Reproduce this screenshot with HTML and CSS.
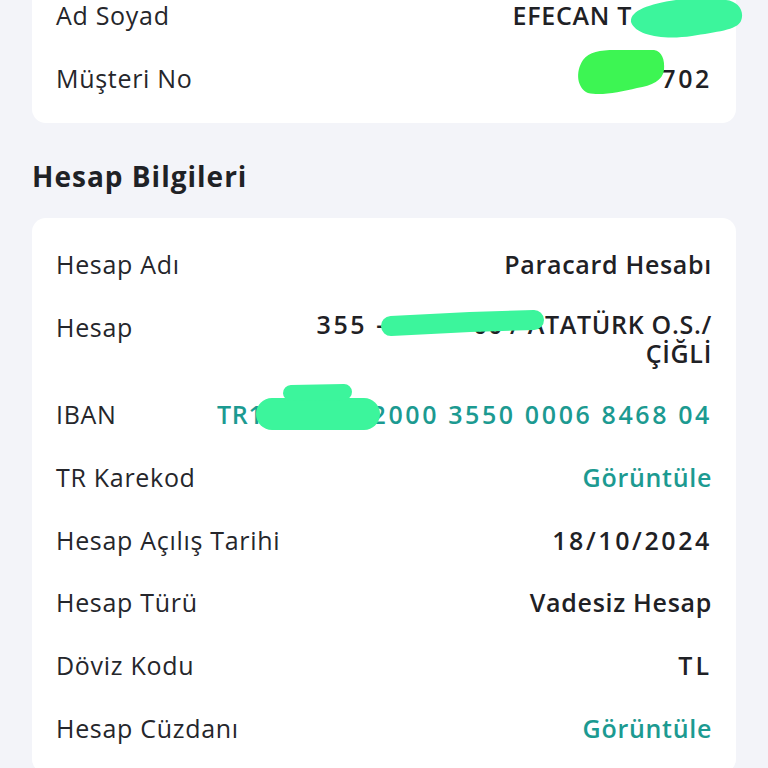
FILE: index.html
```html
<!DOCTYPE html>
<html lang="tr">
<head>
<meta charset="utf-8">
<title>Hesap Bilgileri</title>
<link rel="stylesheet" href="styles.css">
</head>
<body>
<main class="page">
  <section class="card card-top">
    <div class="row">
      <span class="label">Ad Soyad</span>
      <span class="value">EFECAN T<span class="mask mask-name">•••••</span></span>
    </div>
    <div class="row">
      <span class="label">Müşteri No</span>
      <span class="value num"><span class="mask mask-customer">••••</span>702</span>
    </div>
  </section>

  <h2 class="section-title">Hesap Bilgileri</h2>

  <section class="card card-main">
    <div class="row">
      <span class="label">Hesap Adı</span>
      <span class="value">Paracard Hesabı</span>
    </div>
    <div class="row">
      <span class="label">Hesap</span>
      <span class="value value-multi">
        <span class="line"><span class="num">355 -</span><span class="mask mask-branch">•••••</span>00 / ATATÜRK O.S./</span>
        <span class="line">ÇİĞLİ</span>
      </span>
    </div>
    <div class="row">
      <span class="label">IBAN</span>
      <span class="value link">TR1<span class="mask mask-iban">•••••••</span><span class="num">2000 3550 0006 8468 04</span></span>
    </div>
    <div class="row">
      <span class="label">TR Karekod</span>
      <span class="value link">Görüntüle</span>
    </div>
    <div class="row">
      <span class="label">Hesap Açılış Tarihi</span>
      <span class="value num">18/10/2024</span>
    </div>
    <div class="row">
      <span class="label">Hesap Türü</span>
      <span class="value">Vadesiz Hesap</span>
    </div>
    <div class="row">
      <span class="label">Döviz Kodu</span>
      <span class="value wide">TL</span>
    </div>
    <div class="row">
      <span class="label">Hesap Cüzdanı</span>
      <span class="value link">Görüntüle</span>
    </div>
  </section>
</main>

<svg class="redactions" width="768" height="768" viewBox="0 0 768 768" aria-hidden="true">
  <path class="mint-fill" d="M631 22 C630 11 648 4 676 0 L726 0 C738 1 745 11 741 21 C737 30 716 32 692 36 C664 40 636 36 631 22 Z"/>
  <path class="lime-fill" d="M583 60 C589 52 600 50 615 50 L654 50 C662 51 665 60 664 70 C663 80 652 86 637 88 C620 92 601 96 588 93 C577 88 575 72 583 60 Z"/>
  <g class="mint" stroke-linecap="round" stroke-linejoin="round">
    <path d="M391 326 L470 322 L534 320" stroke-width="20"/>
    <path d="M272 414 L364 414" stroke-width="32"/>
    <path d="M291 393 L344 392" stroke-width="16"/>
  </g>
</svg>
</body>
</html>
```

FILE: styles.css
```css
html, body {
  margin: 0;
  padding: 0;
}

body {
  background: #f3f4f9;
  font-family: "Open Sans", "Noto Sans", sans-serif;
  color: #222428;
  width: 768px;
  overflow: hidden;
}

.page {
  margin-top: -30.7px;
  padding: 0 32px;
}

.card {
  background: #ffffff;
  border-radius: 14px;
  padding: 31px 24px 30px;
  display: flex;
  flex-direction: column;
  gap: 32.9px;
}

.row {
  display: flex;
  justify-content: space-between;
  align-items: flex-start;
  gap: 16px;
  font-size: 25px;
  line-height: 30px;
  letter-spacing: 0.7px;
}

.label {
  font-weight: 400;
  white-space: nowrap;
  color: #25262b;
}

.value {
  font-weight: 600;
  text-align: right;
  white-space: nowrap;
  color: #1f2125;
}

.value-multi {
  display: flex;
  flex-direction: column;
  align-items: flex-end;
  line-height: 29px;
  margin: -2px 0 -2px;
}

.line {
  display: block;
}

.num {
  letter-spacing: 2.6px;
}

.wide {
  letter-spacing: 3px;
}

.link {
  color: #1c9a91;
}

.mask {
  display: inline-block;
  overflow: hidden;
  text-align: center;
  letter-spacing: 4px;
  vertical-align: top;
}

.mask-name {
  width: 80px;
}

.mask-customer {
  width: 82px;
}

.mask-branch {
  width: 86px;
}

.mask-iban {
  width: 108px;
}

.section-title {
  margin: 35.4px 0 25.4px;
  font-size: 28px;
  line-height: 34px;
  font-weight: 700;
  letter-spacing: 1px;
  color: #1f2226;
}

.redactions {
  position: absolute;
  top: 0;
  left: 0;
  pointer-events: none;
}

.mint path {
  stroke: #3cf59c;
  fill: none;
}

.mint-fill {
  fill: #3cf59c;
}

.lime-fill {
  fill: #3df553;
}
```
